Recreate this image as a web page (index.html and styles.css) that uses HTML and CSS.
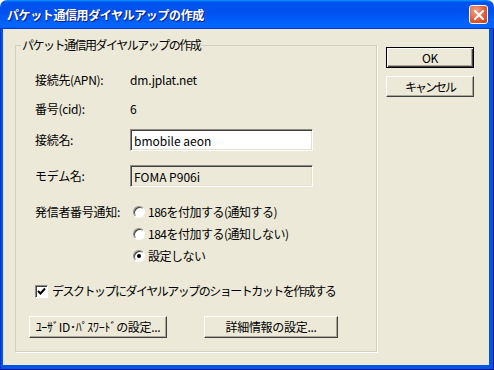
FILE: index.html
```html
<!DOCTYPE html>
<html lang="ja">
<head>
  <meta charset="UTF-8" />
  <title>パケット通信用ダイヤルアップの作成</title>
  <link rel="stylesheet" href="styles.css">
</head>
<body>

  <div class="window">
    <!-- title bar -->
    <div class="titlebar">
      <span class="title">パケット通信用ダイヤルアップの作成</span>
      <button class="close" aria-label="閉じる">
        <svg width="10" height="10" viewBox="0 0 10 10">
          <path d="M1 1 L9 9 M9 1 L1 9" stroke="#fff" stroke-width="2" stroke-linecap="square" />
        </svg>
      </button>
    </div>

    <div class="frame">
      <div class="client">

        <fieldset class="group">
          <legend>パケット通信用ダイヤルアップの作成</legend>

          <div class="row r1">
            <span class="label">接続先(APN):</span>
            <span class="value">dm.jplat.net</span>
          </div>
          <div class="row r2">
            <span class="label">番号(cid):</span>
            <span class="value">6</span>
          </div>
          <div class="row r3">
            <span class="label">接続名:</span>
            <input class="field" type="text" value="bmobile aeon">
          </div>
          <div class="row r4">
            <span class="label">モデム名:</span>
            <input class="field readonly" type="text" value="FOMA P906i" readonly>
          </div>

          <div class="row radios">
            <span class="label">発信者番号通知:</span>
            <div class="options">
              <label class="opt"><input type="radio" name="cid"> 186を付加する(通知する)</label>
              <label class="opt"><input type="radio" name="cid"> 184を付加する(通知しない)</label>
              <label class="opt"><input type="radio" name="cid" checked> 設定しない</label>
            </div>
          </div>

          <label class="row check">
            <input type="checkbox" checked>
            <span>デスクトップにダイヤルアップのショートカットを作成する</span>
          </label>

          <div class="row actions">
            <button class="btn wide1">ﾕｰｻﾞID･ﾊﾟｽﾜｰﾄﾞの設定...</button>
            <button class="btn wide2">詳細情報の設定...</button>
          </div>
        </fieldset>

        <div class="side">
          <button class="btn default">OK</button>
          <button class="btn narrow">キャンセル</button>
        </div>

      </div>
    </div>
  </div>

</body>
</html>
```

FILE: styles.css
```css
* { box-sizing: border-box; margin: 0; padding: 0 }
html, body {
  width: 100%; height: 100%;
  background: #fff;
  overflow: hidden;
}
body {
  font-family: "Noto Sans CJK JP", sans-serif;
  font-size: 12px;
  line-height: 14px;
  color: #000;
}

/*–––– Window ––––*/
.window {
  display: flex; flex-direction: column;
  width: 494px; height: 370px;
}
.titlebar {
  height: 29px; flex: none;
  display: flex; align-items: center; justify-content: space-between;
  padding: 0 6px 0 7px;
  border-radius: 7px 7px 0 0;
  background: linear-gradient(180deg, #0997ff, #0053ee 8%, #0050ee 40%, #06f 88%, #06f 93%, #005bff 95%, #003dd7 96%, #003dd7);
}
.title {
  color: #fff;
  font-weight: bold;
  font-size: 12px;
  letter-spacing: -0.4px;
  text-shadow: 1px 1px #0a1883;
}
.close {
  width: 19px; height: 19px;
  display: flex; align-items: center; justify-content: center;
  border: 1px solid #fff;
  border-radius: 3px;
  background: radial-gradient(circle at 35% 30%, #f0a28a, #e0603a 55%, #c13a16);
}

.frame {
  flex: 1;
  display: flex;
  padding: 0 5px 5px 3px;
  background: #0055e5;
  box-shadow: inset -1px -1px #00138c, inset 1px 0 #0831d9;
}
.client {
  flex: 1;
  display: flex; align-items: flex-start;
  background: #ece9d8;
}

/*–––– Group box ––––*/
.group {
  width: 362px;
  margin: 9px 0 0 12px;
  padding: 14px 13px 13px;
  border: 1px solid #d0d0bf;
  box-shadow: 1px 1px #fff;
}
.group legend {
  margin-left: -8px;
  padding: 0 1px 0 1px;
  letter-spacing: -1.5px;
}

.row { display: flex; align-items: center }
.label {
  width: 101px; flex: none;
  padding-left: 6px;
  letter-spacing: -0.3px;
}
.value { letter-spacing: -0.2px }
.r1 { height: 28px }
.r2 { height: 29px }
.r3 { height: 34px }
.r4 { height: 38px }

.field {
  width: 183px; height: 22px;
  padding: 0 3px;
  font: inherit;
  border: 1px solid;
  border-color: #8d8b82 #fff #fff #8d8b82;
  box-shadow: inset 1px 1px #404040, inset -1px -1px #e3e0d0;
  background: #fff;
  outline: none;
}
.field.readonly { background: #ece9d8 }

/*–––– Radios ––––*/
.radios { align-items: flex-start; padding-top: 6px }
.radios .label { line-height: 22px }
.options { display: flex; flex-direction: column; margin-left: 3px }
.opt {
  height: 22px;
  display: flex; align-items: center; gap: 3px;
  letter-spacing: -0.5px;
}
input[type=radio] {
  appearance: none;
  width: 12px; height: 12px;
  border-radius: 50%;
  border: 1px solid;
  border-color: #8d8b82 #fff #fff #8d8b82;
  box-shadow: inset 1px 1px #404040;
  background: #fff;
  display: grid; place-items: center;
}
input[type=radio]:checked::after {
  content: '';
  width: 4px; height: 4px;
  border-radius: 50%;
  background: #000;
}

/*–––– Checkbox ––––*/
.check {
  height: 22px;
  margin-top: 13px;
  padding-left: 6px;
  gap: 4px;
  letter-spacing: -1.5px;
}
input[type=checkbox] {
  appearance: none;
  width: 13px; height: 13px;
  border: 1px solid;
  border-color: #8d8b82 #fff #fff #8d8b82;
  box-shadow: inset 1px 1px #404040;
  background: #fff no-repeat center / 9px 9px;
}
input[type=checkbox]:checked {
  background-image: url("data:image/svg+xml,%3Csvg xmlns='http://www.w3.org/2000/svg' viewBox='0 0 9 9'%3E%3Cpath d='M1 4 L3.5 6.5 L8 1.5' fill='none' stroke='%23000' stroke-width='2'/%3E%3C/svg%3E");
}

/*–––– Buttons ––––*/
.btn {
  height: 22px;
  font: inherit;
  letter-spacing: -0.3px;
  color: #000;
  background: #ece9d8;
  border: 1px solid;
  border-color: #fff #404040 #404040 #fff;
  box-shadow: inset -1px -1px #aca899;
}
.btn.default {
  border-color: #000;
  box-shadow: inset 1px 1px #fff, inset -1px -1px #404040, inset -2px -2px #aca899;
}
.btn.narrow { letter-spacing: -2px }
.actions { height: 22px; margin-top: 14px; gap: 37px }
.wide1 { width: 138px }
.wide2 { width: 134px }

.side {
  display: flex; flex-direction: column; gap: 8px;
  margin: 18px 0 0 9px;
}
.side .btn { width: 88px; height: 21px }
```
